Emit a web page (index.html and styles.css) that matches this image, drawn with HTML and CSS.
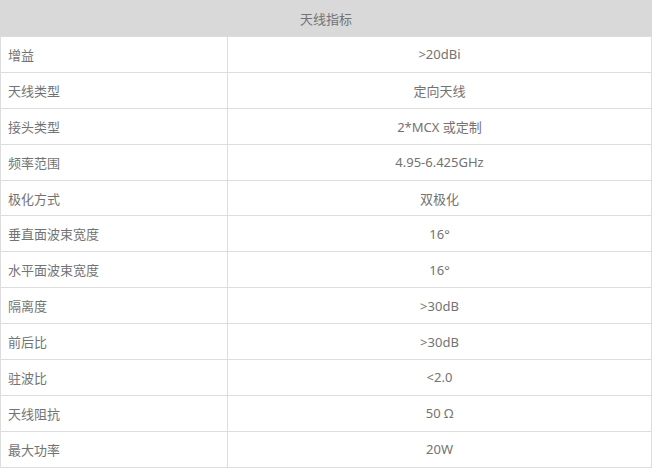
FILE: index.html
```html
<!DOCTYPE html>
<html lang="zh-CN">
<head>
<meta charset="utf-8">
<title>天线指标</title>
<link rel="stylesheet" href="styles.css">
</head>
<body>
<table class="spec">
  <colgroup>
    <col class="col-k">
    <col class="col-v">
  </colgroup>
  <thead>
    <tr><th colspan="2">天线指标</th></tr>
  </thead>
  <tbody>
    <tr><td class="k">增益</td><td class="v">&gt;20dBi</td></tr>
    <tr><td class="k">天线类型</td><td class="v">定向天线</td></tr>
    <tr><td class="k">接头类型</td><td class="v">2*MCX 或定制</td></tr>
    <tr><td class="k">频率范围</td><td class="v">4.95-6.425GHz</td></tr>
    <tr><td class="k">极化方式</td><td class="v">双极化</td></tr>
    <tr><td class="k">垂直面波束宽度</td><td class="v">16°</td></tr>
    <tr><td class="k">水平面波束宽度</td><td class="v">16°</td></tr>
    <tr><td class="k">隔离度</td><td class="v">&gt;30dB</td></tr>
    <tr><td class="k">前后比</td><td class="v">&gt;30dB</td></tr>
    <tr><td class="k">驻波比</td><td class="v">&lt;2.0</td></tr>
    <tr><td class="k">天线阻抗</td><td class="v">50 Ω</td></tr>
    <tr><td class="k">最大功率</td><td class="v">20W</td></tr>
  </tbody>
</table>
</body>
</html>
```
FILE: styles.css
```css
html, body {
  margin: 0;
  padding: 0;
  background: #fff;
}
.spec {
  width: 652px;
  border-collapse: collapse;
  table-layout: fixed;
  font-family: "Noto Sans", "Noto Sans CJK SC", sans-serif;
  font-size: 13px;
  color: #737373;
}
.col-k {
  width: 227px;
}
.spec th {
  height: 36px;
  padding: 0;
  background: #d9d9d9;
  border: 1px solid #d9d9d9;
  border-bottom: 1px solid #ddd;
  font-weight: normal;
  text-align: center;
  box-sizing: border-box;
}
.spec td {
  height: 35.9px;
  padding: 0 7px;
  border: 1px solid #ddd;
  box-sizing: border-box;
}
.spec td.k {
  text-align: left;
}
.spec td.v {
  text-align: center;
}
```
